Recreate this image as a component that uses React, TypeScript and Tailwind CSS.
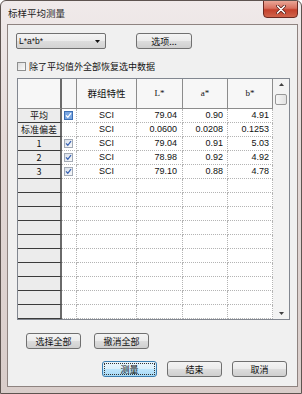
import React from "react";

type Row = { label: string; check: "active" | "on" | "none"; group: string; L: string; a: string; b: string };

const filled: Row[] = [
  { label: "平均", check: "active", group: "SCI", L: "79.04", a: "0.90", b: "4.91" },
  { label: "标准偏差", check: "none", group: "SCI", L: "0.0600", a: "0.0208", b: "0.1253" },
  { label: "1", check: "on", group: "SCI", L: "79.04", a: "0.91", b: "5.03" },
  { label: "2", check: "on", group: "SCI", L: "78.98", a: "0.92", b: "4.92" },
  { label: "3", check: "on", group: "SCI", L: "79.10", a: "0.88", b: "4.78" },
];

const empty: Row[] = Array.from({ length: 10 }, () => ({ label: "", check: "none", group: "", L: "", a: "", b: "" }));

function Check({ state }: { state: "active" | "on" | "none" }) {
  if (state === "none") return null;
  const active = state === "active";
  return (
    <span
      className={`flex h-[9px] w-[9px] items-center justify-center border ${
        active ? "border-[#3d6fb4] bg-[#79a6e2]" : "border-[#a3aab4] bg-[linear-gradient(135deg,#d9e0ea,#f8f9fb)]"
      }`}
    >
      <svg width="7" height="7" viewBox="0 0 7 7">
        <path d="M1 3.4 L2.8 5.3 L6 1.1" fill="none" stroke={active ? "#ffffff" : "#3a63b3"} strokeWidth="1.3" />
      </svg>
    </span>
  );
}

function Btn({ children, w, focused }: { children: React.ReactNode; w: string; focused?: boolean }) {
  return (
    <div
      className={`flex h-[16px] ${w} rounded-[3px] border text-[9px] leading-[11px] text-[#111] ${
        focused
          ? "border-[#3c7fb1] bg-[linear-gradient(#eaf6fd,#d9f0fc_50%,#bee6fd_50%,#a7d9f5)]"
          : "border-[#707070] bg-[linear-gradient(#f4f4f4,#ebebeb_50%,#dddddd_50%,#cfcfcf)]"
      }`}
    >
      <div
        className={`m-[1px] flex flex-1 items-center justify-center border ${
          focused ? "border-dotted border-[#333]" : "border-transparent"
        }`}
      >
        {children}
      </div>
    </div>
  );
}

function TableRow({ r }: { r: Row }) {
  const num = "font-['Liberation_Sans',sans-serif] text-[9px]";
  const cell = "border-r border-b border-dotted border-[#b4b4b4]";
  return (
    <div className="grid h-[14px] grid-cols-[44px_15px_60px_46px_45px_45px] grid-rows-[14px] leading-[11px]">
      <div className="flex items-center justify-center border-r-2 border-b border-r-[#6a6a6a] border-b-[#3c3c3c] bg-[#ececec] text-[9px]">
        {r.label}
      </div>
      <div className={`flex items-center pl-[2px] ${cell} bg-white`}>
        <Check state={r.check} />
      </div>
      <div className={`flex items-center justify-center ${cell} bg-white ${num}`}>{r.group}</div>
      <div className={`flex items-center justify-end pr-[5px] ${cell} bg-white ${num}`}>{r.L}</div>
      <div className={`flex items-center justify-end pr-[4px] ${cell} bg-white ${num}`}>{r.a}</div>
      <div className={`flex items-center justify-end pr-[3px] ${cell} bg-white ${num}`}>{r.b}</div>
    </div>
  );
}

export default function App() {
  const head = "flex items-center justify-center border-r border-b border-[#8c8c8c] bg-[#f7f7f7]";
  return (
    <div className="flex h-[394px] w-[302px] flex-col overflow-hidden rounded-t-[6px] border border-[#5e5450] bg-[linear-gradient(180deg,#f0eaea,#e4dad8_35%,#d9cdca)] font-['Noto_Sans_CJK_SC',sans-serif] text-[#111]">
      {/* 标题栏 */}
      <div className="flex h-[23px] shrink-0 items-start justify-between">
        <div className="pl-[7px] pt-[6px] text-[9.5px] leading-[12px] text-[#1e1e1e]">标样平均测量</div>
        <div className="mr-[3px] -mt-[1px] flex h-[18px] w-[35px] items-center justify-center rounded-b-[4px] border border-[#6b2a22] bg-[linear-gradient(#eaa797,#d9715f_45%,#c4412c_55%,#d0644c)]">
          <svg width="10" height="9" viewBox="0 0 10 9">
            <path d="M1.5 1 L8.5 8 M8.5 1 L1.5 8" stroke="#5a1d15" strokeWidth="3" strokeLinecap="round" />
            <path d="M1.5 1 L8.5 8 M8.5 1 L1.5 8" stroke="#ffffff" strokeWidth="1.6" strokeLinecap="round" />
          </svg>
        </div>
      </div>

      {/* 客户区 */}
      <div className="mb-[6px] ml-[6px] mr-[3px] flex flex-1 flex-col border border-[#8e8380] bg-[#f0f0f0]">
        <div className="ml-[8px] mt-[8px] flex h-[16px] items-center">
          <div className="flex h-[16px] w-[90px] items-center justify-between rounded-[2px] border border-[#707070] bg-[linear-gradient(#f4f4f4,#ebebeb_50%,#dddddd_50%,#d2d2d2)] pl-[2px] pr-[5px]">
            <span className="font-['Liberation_Sans',sans-serif] text-[8.5px] leading-[10px]">L*a*b*</span>
            <svg width="5" height="3" viewBox="0 0 5 3">
              <path d="M0 0 H5 L2.5 3 Z" fill="#111" />
            </svg>
          </div>
          <div className="ml-[30px]">
            <Btn w="w-[56px]">选项...</Btn>
          </div>
        </div>

        <div className="ml-[9px] mt-[13px] flex h-[9px] items-center gap-[3px]">
          <span className="h-[9px] w-[9px] border border-[#8e8f8f] bg-[linear-gradient(135deg,#dcdcdc,#fbfbfb)]" />
          <span className="text-[9px] leading-[10px]">除了平均值外全部恢复选中数据</span>
        </div>

        {/* 表格 */}
        <div className="ml-[9px] mt-[7px] flex w-[273px] border border-[#828790] bg-white">
          <div className="flex w-[255px] flex-col">
            <div className="grid h-[30px] grid-cols-[44px_15px_60px_46px_45px_45px] grid-rows-[30px] text-[9px] leading-[11px]">
              <div className={`${head} border-r-2 border-r-[#6a6a6a] bg-[#f0f0f0]`} />
              <div className={head} />
              <div className={`${head} text-[9.5px]`}>群组特性</div>
              <div className={`${head} font-['Liberation_Serif',serif]`}>L*</div>
              <div className={`${head} font-['Liberation_Serif',serif]`}>a*</div>
              <div className={`${head} font-['Liberation_Serif',serif]`}>b*</div>
            </div>
            {[...filled, ...empty].map((r, i) => (
              <TableRow key={i} r={r} />
            ))}
          </div>
          {/* 滚动条 */}
          <div className="flex w-[16px] flex-col items-center bg-[#f3f3f3]">
            <svg className="mt-[4px]" width="5" height="3" viewBox="0 0 5 3">
              <path d="M0 3 H5 L2.5 0 Z" fill="#404040" />
            </svg>
            <div className="mt-[8px] h-[11px] w-[12px] rounded-[2px] border border-[#979797] bg-[linear-gradient(90deg,#f6f6f6,#e2e2e2)]" />
            <div className="flex-1" />
            <svg className="mb-[4px]" width="5" height="3" viewBox="0 0 5 3">
              <path d="M0 0 H5 L2.5 3 Z" fill="#404040" />
            </svg>
          </div>
        </div>

        <div className="ml-[18px] mt-[13px] flex gap-[13px]">
          <Btn w="w-[55px]">选择全部</Btn>
          <Btn w="w-[55px]">撤消全部</Btn>
        </div>

        <div className="ml-[94px] mt-[12px] flex gap-[10px]">
          <Btn w="w-[55px]" focused>
            测量
          </Btn>
          <Btn w="w-[55px]">结束</Btn>
          <Btn w="w-[55px]">取消</Btn>
        </div>
      </div>
    </div>
  );
}
